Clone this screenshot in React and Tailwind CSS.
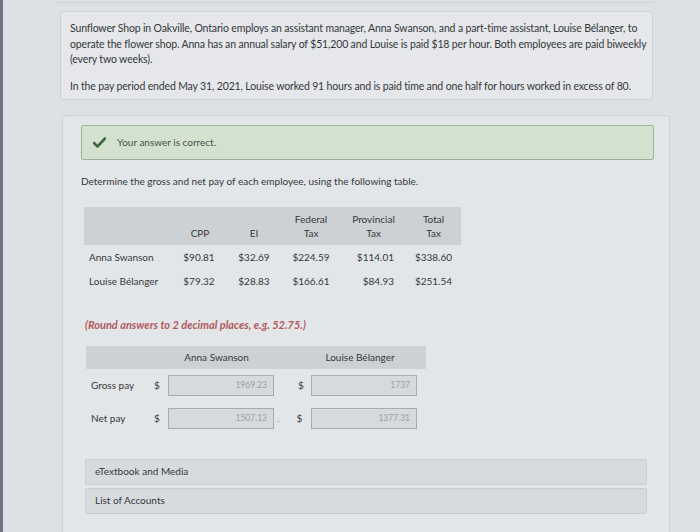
import React from "react";

const font = { fontFamily: "Lato, 'Open Sans', sans-serif" };

function Input({ value }) {
  return (
    <div className="w-[106px] h-[21px] bg-[#d7dadd] border border-[#a7abaf] flex items-center justify-end pr-[6px] text-[8.5px] text-[#9a9ea3]">
      {value}
    </div>
  );
}

export default function App() {
  const rows = [
    ["Anna Swanson", "$90.81", "$32.69", "$224.59", "$114.01", "$338.60"],
    ["Louise Bélanger", "$79.32", "$28.83", "$166.61", "$84.93", "$251.54"],
  ];
  return (
    <div
      className="w-[700px] h-[532px] bg-[#dde0e4] overflow-hidden flex text-[#35383b]"
      style={font}
    >
      <div className="w-[3px] h-full bg-[#6f7584]" />
      <div className="flex-1 relative">
        <div className="h-[3px] ml-[52px] w-[600px] border-b border-[#cfd2d6]" />
        {/* top card */}
        <div className="ml-[57px] mt-[8px] w-[593px] h-[89px] border border-[#cdd0d4] rounded-[3px] bg-[#e5e7ea] pl-[9px] pt-[9px] text-[10.5px] leading-[15.5px] whitespace-nowrap tracking-[-0.15px]">
          <p>
            Sunflower Shop in Oakville, Ontario employs an assistant manager, Anna Swanson, and a part-time assistant, Louise Bélanger, to
            <br />
            operate the flower shop. Anna has an annual salary of $51,200 and Louise is paid $18 per hour. Both employees are paid biweekly
            <br />
            (every two weeks).
          </p>
          <p className="mt-[11px]">
            In the pay period ended May 31, 2021, Louise worked 91 hours and is paid time and one half for hours worked in excess of 80.
          </p>
        </div>
        {/* main card */}
        <div className="ml-[59px] mt-[15px] w-[608px] h-[430px] border border-[#cdd0d4] rounded-[3px] bg-[#e3e6e9] pl-[18px] pt-[9px]">
          <div className="w-[573px] h-[35px] bg-[#d3e2cf] border border-[#9db498] rounded-[2px] flex items-center pl-[11px] text-[10px] text-[#4a4f4a]">
            <svg width="13" height="11" viewBox="0 0 13 11" className="mr-[11px]">
              <path d="M1 6 L4.5 9.5 L12 1.5" stroke="#3f6a3c" strokeWidth="2.6" fill="none" strokeLinecap="round" strokeLinejoin="round" />
            </svg>
            Your answer is correct.
          </div>
          <div className="mt-[15px] text-[10px] leading-[12px]">
            Determine the gross and net pay of each employee, using the following table.
          </div>
          {/* table 1 */}
          <div className="mt-[20px] ml-[3px] w-[377px] text-[10px]">
            <div className="grid grid-cols-[87px_56px_54px_60px_65px_55px] bg-[#ced1d4] h-[38px] items-end pb-[5px] leading-[14px]">
              <div />
              <div className="text-center pl-[2px]">CPP</div>
              <div className="text-center">EI</div>
              <div className="text-center">Federal<br />Tax</div>
              <div className="text-center">Provincial<br />Tax</div>
              <div className="text-center">Total<br />Tax</div>
            </div>
            {rows.map((r, i) => (
              <div key={i} className="grid grid-cols-[87px_56px_54px_60px_65px_55px] h-[24px] items-center">
                <div className="pl-[5px]">{r[0]}</div>
                <div className="text-center">{r[1]}</div>
                <div className="text-center">{r[2]}</div>
                <div className="text-center">{r[3]}</div>
                <div className="text-right pr-[12px]">{r[4]}</div>
                <div className="text-center">{r[5]}</div>
              </div>
            ))}
          </div>
          <div className="mt-[24px] ml-[4px] text-[11px] italic font-bold text-[#b25a5e]">
            (Round answers to 2 decimal places, e.g. 52.75.)
          </div>
          {/* table 2 */}
          <div className="mt-[12px] ml-[5px] w-[340px] text-[10px]">
            <div className="h-[23px] bg-[#ced1d4] flex items-center">
              <div className="w-[80px]" />
              <div className="w-[105px] text-center -ml-[2px]">Anna Swanson</div>
              <div className="w-[106px] text-center ml-[38px]">Louise Bélanger</div>
            </div>
            <div className="flex items-center mt-[6px] h-[22px]">
              <div className="w-[68px] pl-[5px]">Gross pay</div>
              <div className="w-[14px]">$</div>
              <Input value="1969.23" />
              <div className="w-[37px] pl-[24px]">$</div>
              <Input value="1737" />
            </div>
            <div className="flex items-center mt-[11px] h-[22px]">
              <div className="w-[68px] pl-[5px]">Net pay</div>
              <div className="w-[14px]">$</div>
              <Input value="1507.13" />
              <div className="w-[37px] flex">
                <span className="ml-[3px] text-[#8b8f93]">.</span>
                <span className="ml-[17px]">$</span>
              </div>
              <Input value="1377.31" />
            </div>
          </div>
          <div className="mt-[29px] ml-[4px] w-[562px] h-[26px] bg-[#d8dbde] border border-[#cbced1] rounded-[2px] flex items-center pl-[9px] text-[10px]">
            eTextbook and Media
          </div>
          <div className="mt-[3px] ml-[4px] w-[562px] h-[26px] bg-[#d8dbde] border border-[#cbced1] rounded-[2px] flex items-center pl-[9px] text-[10px]">
            List of Accounts
          </div>
        </div>
      </div>
    </div>
  );
}
